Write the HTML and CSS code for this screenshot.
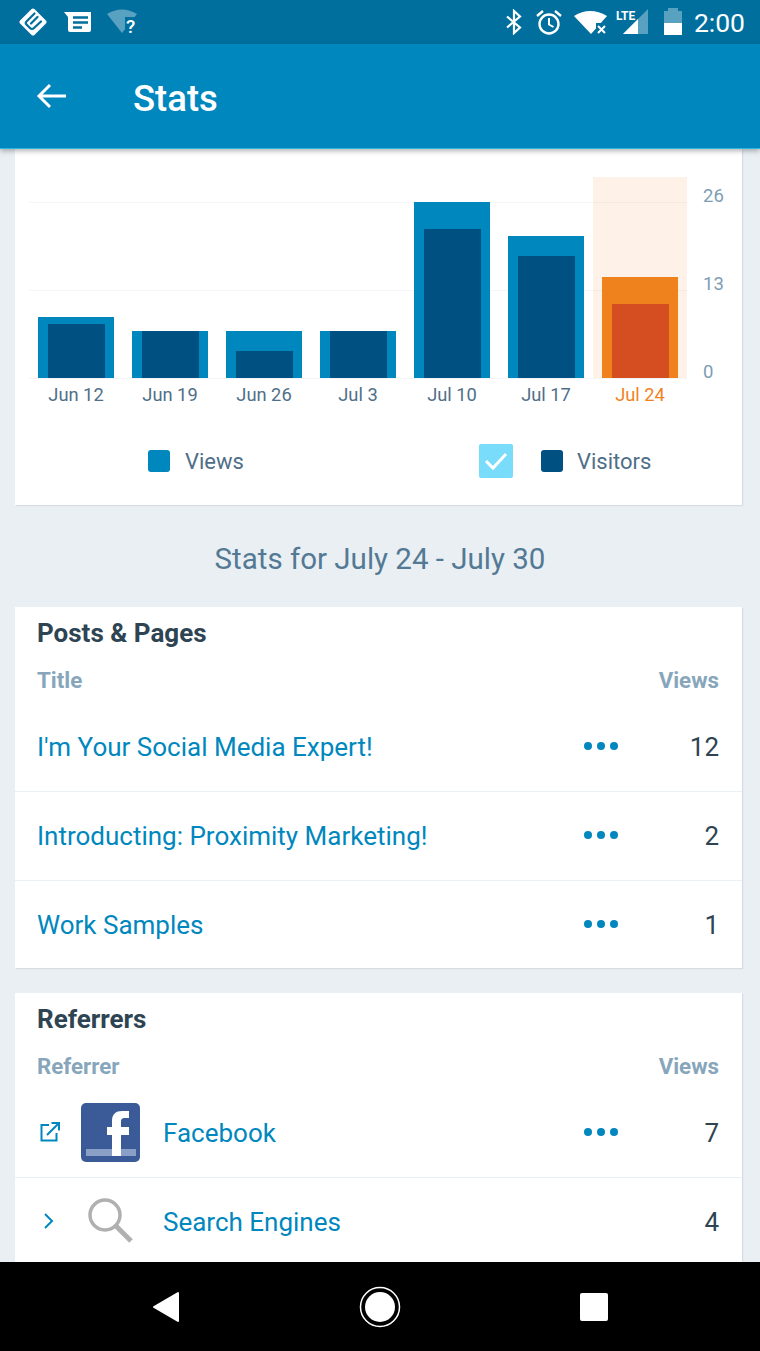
FILE: index.html
```html
<!DOCTYPE html>
<html lang="en">
<head>
    <meta charset="UTF-8">
    <meta name="viewport" content="width=device-width, initial-scale=1.0">
    <title>Stats</title>
    <link rel="stylesheet" href="styles.css">
</head>
<body>
    <div class="screen">
        <div class="status-bar">
            <svg class="icon-jetpack" width="28" height="28" viewBox="0 0 28 28">
                <path d="M14 2.500 25.500 14 14 25.500 2.500 14Z" fill="#fff" stroke="#fff" stroke-width="4" stroke-linejoin="round"/>
                <path d="M15.500 5.500 7.500 13.500Q6 15 7.500 16.500L11 20Q13 22 15 20L22 13.500" fill="none" stroke="#006f9e" stroke-width="2.200" stroke-linecap="round"/>
                <path d="M18.500 9 12 15.500" fill="none" stroke="#006f9e" stroke-width="2.200" stroke-linecap="round"/>
            </svg>
            <svg class="icon-news" width="27" height="24" viewBox="0 0 27 24">
                <path d="M0 2H27V20a2 2 0 0 1-2 2H6a2 2 0 0 1-2-2V7Z" fill="#fff"/>
                <path d="M9 7.500H24M9 12.500H24M9 17.500H18" stroke="#006f9e" stroke-width="2.400"/>
            </svg>
            <svg class="icon-wifi-unknown" width="32" height="32" viewBox="0 -2 32 32">
                <path d="M0 6Q15-3 30 6L15 25Z" fill="#fff" opacity=".35"/>
                <rect x="18" y="9" width="14" height="19" fill="#006f9e"/>
                <text x="19" y="25" class="wifi-mark">?</text>
            </svg>
            <div class="status-right">
                <svg width="18" height="26" viewBox="0 0 18 26">
                    <path d="M2 7.500 15 18.500 9 24V2L15 7.500 2 18.500" fill="none" stroke="#fff" stroke-width="2.200"/>
                </svg>
                <svg class="icon-alarm" width="28" height="27" viewBox="0 0 28 27">
                    <circle cx="14" cy="15" r="9.500" fill="none" stroke="#fff" stroke-width="2.400"/>
                    <path d="M14 9V15.500L18.500 18" fill="none" stroke="#fff" stroke-width="2"/>
                    <path d="M2 7 8 2M26 7 20 2" stroke="#fff" stroke-width="2.400"/>
                </svg>
                <svg class="icon-wifi" width="34" height="26" viewBox="0 0 34 26">
                    <path d="M0 7Q16-3 33 7L17 25Z" fill="#fff"/>
                    <rect x="22" y="14" width="12" height="12" fill="#006f9e"/>
                    <path d="M24 17 31 24M31 17 24 24" stroke="#fff" stroke-width="2"/>
                </svg>
                <div class="lte">
                    <span class="lte-label">LTE</span>
                    <svg width="33" height="26" viewBox="0 0 33 26">
                        <path d="M33 0V25H8Z" fill="#fff" opacity=".35"/>
                        <path d="M23 10V25H8Z" fill="#fff"/>
                    </svg>
                </div>
                <div class="battery">
                    <div class="battery-cap"></div>
                    <div class="battery-body"><div class="battery-fill"></div></div>
                </div>
                <span class="status-time">2:00</span>
            </div>
        </div>

        <header class="app-bar">
            <svg width="32" height="32" viewBox="0 0 32 32">
                <path d="M30 16H3M14 5 3 16 14 27" fill="none" stroke="#fff" stroke-width="3"/>
            </svg>
            <h1>Stats</h1>
        </header>

        <main class="content">
            <section class="card chart-card">
                <div class="chart">
                    <div class="plot">
                        <div class="gridline grid-top"></div>
                        <div class="gridline grid-mid"></div>
                        <div class="gridline grid-base"></div>
                        <div class="bars">
                            <div class="col"><div class="bar" style="height:61px"><div class="bar-inner" style="height:54px"></div></div></div>
                            <div class="col"><div class="bar" style="height:47px"><div class="bar-inner" style="height:47px"></div></div></div>
                            <div class="col"><div class="bar" style="height:47px"><div class="bar-inner" style="height:27px"></div></div></div>
                            <div class="col"><div class="bar" style="height:47px"><div class="bar-inner" style="height:47px"></div></div></div>
                            <div class="col"><div class="bar" style="height:176px"><div class="bar-inner" style="height:149px"></div></div></div>
                            <div class="col"><div class="bar" style="height:142px"><div class="bar-inner" style="height:122px"></div></div></div>
                            <div class="col active"><div class="bar" style="height:101px"><div class="bar-inner" style="height:74px"></div></div></div>
                        </div>
                    </div>
                    <div class="y-axis">
                        <span>26</span>
                        <span>13</span>
                        <span>0</span>
                    </div>
                </div>
                <div class="x-axis">
                    <span>Jun 12</span>
                    <span>Jun 19</span>
                    <span>Jun 26</span>
                    <span>Jul 3</span>
                    <span>Jul 10</span>
                    <span>Jul 17</span>
                    <span class="active-label">Jul 24</span>
                </div>
                <div class="legend">
                    <div class="legend-views">
                        <div class="swatch swatch-views"></div>
                        <span>Views</span>
                    </div>
                    <div class="legend-visitors">
                        <div class="check">
                            <svg width="24" height="20" viewBox="0 0 24 20">
                                <path d="M2 10 9 17 22 3" fill="none" stroke="#fff" stroke-width="3"/>
                            </svg>
                        </div>
                        <div class="swatch swatch-visitors"></div>
                        <span>Visitors</span>
                    </div>
                </div>
            </section>

            <h2 class="range">Stats for July 24 - July 30</h2>

            <section class="card list-card">
                <h3>Posts &amp; Pages</h3>
                <div class="list-head"><span>Title</span><span>Views</span></div>
                <div class="row">
                    <a class="row-link">I'm Your Social Media Expert!</a>
                    <div class="dots"><i></i><i></i><i></i></div>
                    <span class="count">12</span>
                </div>
                <div class="row">
                    <a class="row-link">Introducting: Proximity Marketing!</a>
                    <div class="dots"><i></i><i></i><i></i></div>
                    <span class="count">2</span>
                </div>
                <div class="row">
                    <a class="row-link">Work Samples</a>
                    <div class="dots"><i></i><i></i><i></i></div>
                    <span class="count">1</span>
                </div>
            </section>

            <section class="card list-card referrers">
                <h3>Referrers</h3>
                <div class="list-head"><span>Referrer</span><span>Views</span></div>
                <div class="row">
                    <svg class="row-toggle" width="22" height="22" viewBox="0 0 22 22">
                        <path d="M10 4H2.500V19.500H17.500V12" fill="none" stroke="#0087be" stroke-width="2"/>
                        <path d="M8 14 19 3M12.500 2H20V9.500" fill="none" stroke="#0087be" stroke-width="2"/>
                    </svg>
                    <svg class="row-thumb" width="60" height="60" viewBox="0 0 60 60">
                        <rect width="59" height="59" rx="5" fill="#3b5b98"/>
                        <rect x="5" y="46" width="50" height="7" fill="#8a9fc6"/>
                        <path d="M31 53V32H26V24H31V18C31 11 35 8 41 8H48V15H44C41 15 40 16 40 19V24H48V32H40V53Z" fill="#fff"/>
                    </svg>
                    <a class="row-link">Facebook</a>
                    <div class="dots"><i></i><i></i><i></i></div>
                    <span class="count">7</span>
                </div>
                <div class="row">
                    <svg class="row-toggle" width="22" height="22" viewBox="0 0 22 22">
                        <path d="M6 4 13 11 6 18" fill="none" stroke="#0087be" stroke-width="2"/>
                    </svg>
                    <svg class="row-thumb" width="60" height="60" viewBox="0 0 60 60">
                        <circle cx="24" cy="23" r="15" fill="none" stroke="#b0b0b0" stroke-width="3.500"/>
                        <path d="M35 34 50 49" stroke="#b0b0b0" stroke-width="5"/>
                    </svg>
                    <a class="row-link">Search Engines</a>
                    <span class="count">4</span>
                </div>
            </section>
        </main>

        <nav class="nav-bar">
            <svg width="28" height="32" viewBox="0 0 28 32">
                <path d="M26 2V30L2 16Z" fill="#fff" stroke="#fff" stroke-width="2" stroke-linejoin="round"/>
            </svg>
            <svg width="42" height="42" viewBox="0 0 42 42">
                <circle cx="21" cy="21" r="19.500" fill="none" stroke="#fff" stroke-width="1.500"/>
                <circle cx="21" cy="21" r="15" fill="#fff"/>
            </svg>
            <div class="nav-square"></div>
        </nav>
    </div>
</body>
</html>
```

FILE: styles.css
```css
body {
    margin: 0;
    padding: 0;
    font-family: Roboto, sans-serif;
    color: #2e4453;
    overflow: hidden;
}

.screen {
    width: 760px;
    height: 1351px;
    display: flex;
    flex-direction: column;
    background-color: #e9eff3;
    overflow: hidden;
}

/* status bar */
.status-bar {
    height: 44px;
    flex: none;
    display: flex;
    align-items: center;
    padding: 0 15px 0 19px;
    background-color: #006f9e;
}

.icon-news {
    margin-left: 17px;
}

.icon-wifi-unknown {
    margin-left: 16px;
    overflow: visible;
}

.wifi-mark {
    font-family: Roboto, sans-serif;
    font-size: 19px;
    font-weight: 500;
    fill: #fff;
}

.status-right {
    margin-left: auto;
    display: flex;
    align-items: center;
}

.icon-alarm {
    margin-left: 12px;
}

.icon-wifi {
    margin-left: 11px;
}

.lte {
    position: relative;
    margin-left: 7px;
    width: 33px;
    height: 26px;
}

.lte-label {
    position: absolute;
    top: 0;
    left: 1px;
    font-size: 12px;
    font-weight: 700;
    line-height: 14px;
    color: #fff;
}

.battery {
    margin: -2px 0 0 16px;
    display: flex;
    flex-direction: column;
    align-items: center;
}

.battery-cap {
    width: 10px;
    height: 3px;
    background-color: rgba(255, 255, 255, 0.35);
}

.battery-body {
    width: 18px;
    height: 24px;
    display: flex;
    align-items: flex-end;
    background-color: rgba(255, 255, 255, 0.35);
}

.battery-fill {
    width: 100%;
    height: 12px;
    background-color: #fff;
}

.status-time {
    margin-left: 12px;
    font-size: 26.500px;
    color: #fff;
}

/* app bar */
.app-bar {
    height: 105px;
    flex: none;
    display: flex;
    align-items: center;
    position: relative;
    z-index: 2;
    padding-left: 36px;
    background-color: #0087be;
    border-bottom: 1px solid #2fb4e0;
    box-sizing: border-box;
    box-shadow: 0 2px 5px rgba(0, 0, 0, 0.3);
}

.app-bar h1 {
    margin: 5px 0 0 65px;
    font-size: 36.500px;
    font-weight: 500;
    color: #fff;
}

/* cards */
.content {
    flex: 1;
    min-height: 0;
    overflow: hidden;
}

.card {
    width: 727px;
    margin-left: 15px;
    background-color: #fff;
    box-shadow: 1px 1px 1px #d5dde3;
}

/* chart */
.chart-card {
    height: 356px;
    padding-top: 28px;
    box-sizing: border-box;
}

.chart {
    display: flex;
    margin-left: 14px;
}

.plot {
    position: relative;
    width: 658px;
    height: 202px;
}

.gridline {
    position: absolute;
    left: 0;
    right: 0;
    height: 1px;
    background-color: #f3f6f8;
}

.grid-top {
    top: 25px;
}

.grid-mid {
    top: 113px;
}

.grid-base {
    top: 201px;
}

.bars {
    position: relative;
    display: flex;
    height: 201px;
}

.col {
    width: 94px;
    display: flex;
    justify-content: center;
    align-items: flex-end;
}

.col.active {
    background-color: rgba(243, 128, 30, 0.1);
}

.bar {
    width: 76px;
    display: flex;
    justify-content: center;
    align-items: flex-end;
    background-color: #0087be;
}

.bar-inner {
    width: 57px;
    background-color: #005082;
}

.col.active .bar {
    background-color: #f0821e;
}

.col.active .bar-inner {
    background-color: #d54e21;
}

.y-axis {
    display: flex;
    flex-direction: column;
    gap: 66px;
    padding-top: 8px;
    margin-left: 16px;
    font-size: 18.500px;
    line-height: 22px;
    color: #7d9db5;
}

.x-axis {
    display: flex;
    margin: 1px 0 0 14px;
    font-size: 18.300px;
    line-height: 22px;
    color: #4f6f88;
}

.x-axis span {
    width: 94px;
    text-align: center;
}

.x-axis .active-label {
    color: #f0821e;
}

.legend {
    display: flex;
    align-items: center;
    margin-top: 38px;
    font-size: 22px;
    color: #4f6f88;
}

.legend-views,
.legend-visitors {
    display: flex;
    align-items: center;
}

.legend-views {
    margin-left: 133px;
}

.legend-visitors {
    margin-left: 235px;
}

.swatch {
    width: 22px;
    height: 22px;
    border-radius: 3px;
    margin-right: 15px;
}

.swatch-views {
    background-color: #0087be;
}

.swatch-visitors {
    margin-right: 14px;
    background-color: #005082;
}

.check {
    width: 34px;
    height: 34px;
    display: flex;
    justify-content: center;
    align-items: center;
    margin-right: 28px;
    background-color: #78dcfa;
    border-radius: 2px;
}

.range {
    margin: 36px 0 30px;
    font-size: 29.500px;
    font-weight: 400;
    line-height: 36px;
    text-align: center;
    color: #537994;
}

/* lists */
.list-card {
    padding-top: 9px;
    margin-bottom: 25px;
}

.list-card h3 {
    margin: 0 22px;
    font-size: 26px;
    font-weight: 700;
    line-height: 34px;
}

.list-head {
    display: flex;
    justify-content: space-between;
    margin: 17px 23px 0 22px;
    font-size: 22.300px;
    font-weight: 700;
    line-height: 26px;
    color: #87a6bc;
}

.row {
    height: 89px;
    display: flex;
    align-items: center;
    padding: 0 23px 0 22px;
    border-bottom: 1px solid #e9eff3;
    box-sizing: border-box;
}

.list-head + .row {
    height: 90px;
    margin-top: 9px;
}

.row:last-child {
    height: 87px;
    border-bottom: 0;
}

.row-link {
    font-size: 26px;
    color: #0087be;
}

.dots {
    display: flex;
    gap: 5px;
    margin-left: auto;
    margin-top: -2px;
}

.dots i {
    width: 8px;
    height: 8px;
    border-radius: 50%;
    background-color: #0087be;
}

.count {
    width: 101px;
    flex: none;
    text-align: right;
    font-size: 26px;
}

.row > .row-link + .count {
    margin-left: auto;
}

.row-toggle {
    flex: none;
    margin: -2px 20px 0 2px;
}

.row-thumb {
    flex: none;
    margin-right: 22px;
}

.referrers {
    padding-bottom: 40px;
}

/* nav bar */
.nav-bar {
    height: 89px;
    flex: none;
    position: relative;
    z-index: 2;
    display: flex;
    align-items: center;
    gap: 179px;
    padding-left: 152px;
    background-color: #000;
}

.nav-square {
    width: 28px;
    height: 28px;
    background-color: #fff;
    border-radius: 2px;
}
```
